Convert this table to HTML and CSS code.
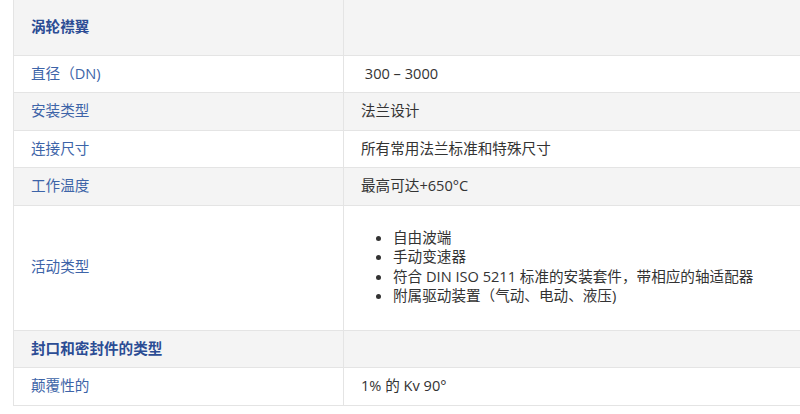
FILE: index.html
```html
<!DOCTYPE html>
<html lang="zh">
<head>
<meta charset="utf-8">
<link rel="stylesheet" href="styles.css">
</head>
<body>
<table class="spec">
  <tr class="grey head first"><th>涡轮襟翼</th><td></td></tr>
  <tr><td class="label">直径（DN)</td><td class="val">&nbsp;300 – 3000</td></tr>
  <tr class="grey"><td class="label">安装类型</td><td class="val">法兰设计</td></tr>
  <tr><td class="label">连接尺寸</td><td class="val">所有常用法兰标准和特殊尺寸</td></tr>
  <tr class="grey"><td class="label">工作温度</td><td class="val">最高可达+650°C</td></tr>
  <tr class="tall"><td class="label">活动类型</td><td class="val">
    <ul>
      <li>自由波端</li>
      <li>手动变速器</li>
      <li>符合 DIN ISO 5211 标准的安装套件，带相应的轴适配器</li>
      <li>附属驱动装置（气动、电动、液压)</li>
    </ul>
  </td></tr>
  <tr class="grey head"><th>封口和密封件的类型</th><td></td></tr>
  <tr><td class="label">颠覆性的</td><td class="val">1% 的 Kv 90°</td></tr>
</table>
</body>
</html>
```
FILE: styles.css
```css
html, body {
  margin: 0;
  padding: 0;
  overflow: hidden;
  background: #fff;
}
body {
  padding-left: 13px;
  font-family: "Open Sans", "Noto Sans CJK SC", sans-serif;
  font-size: 14.6px;
  color: #333;
}
.spec {
  border-collapse: collapse;
  width: 820px;
  table-layout: fixed;
}
.spec td, .spec th {
  border: 1px solid #e4e4e4;
  border-top: 0;
  padding: 7px 17px 9px;
  line-height: 20.5px;
  text-align: left;
  vertical-align: middle;
}
.spec td:first-child, .spec th:first-child {
  width: 295px;
}
.grey td, .grey th {
  background: #f4f4f4;
}
.head th {
  font-weight: 700;
  color: #2b4c94;
}
.first th, .first td {
  padding-top: 16px;
  padding-bottom: 18px;
}
.label {
  color: #3d64a8;
}
.val {
  color: #333;
}
.tall td {
  padding-top: 22px;
  padding-bottom: 24px;
}
ul {
  margin: 0;
  padding-left: 32px;
}
li {
  line-height: 19.5px;
}
```
